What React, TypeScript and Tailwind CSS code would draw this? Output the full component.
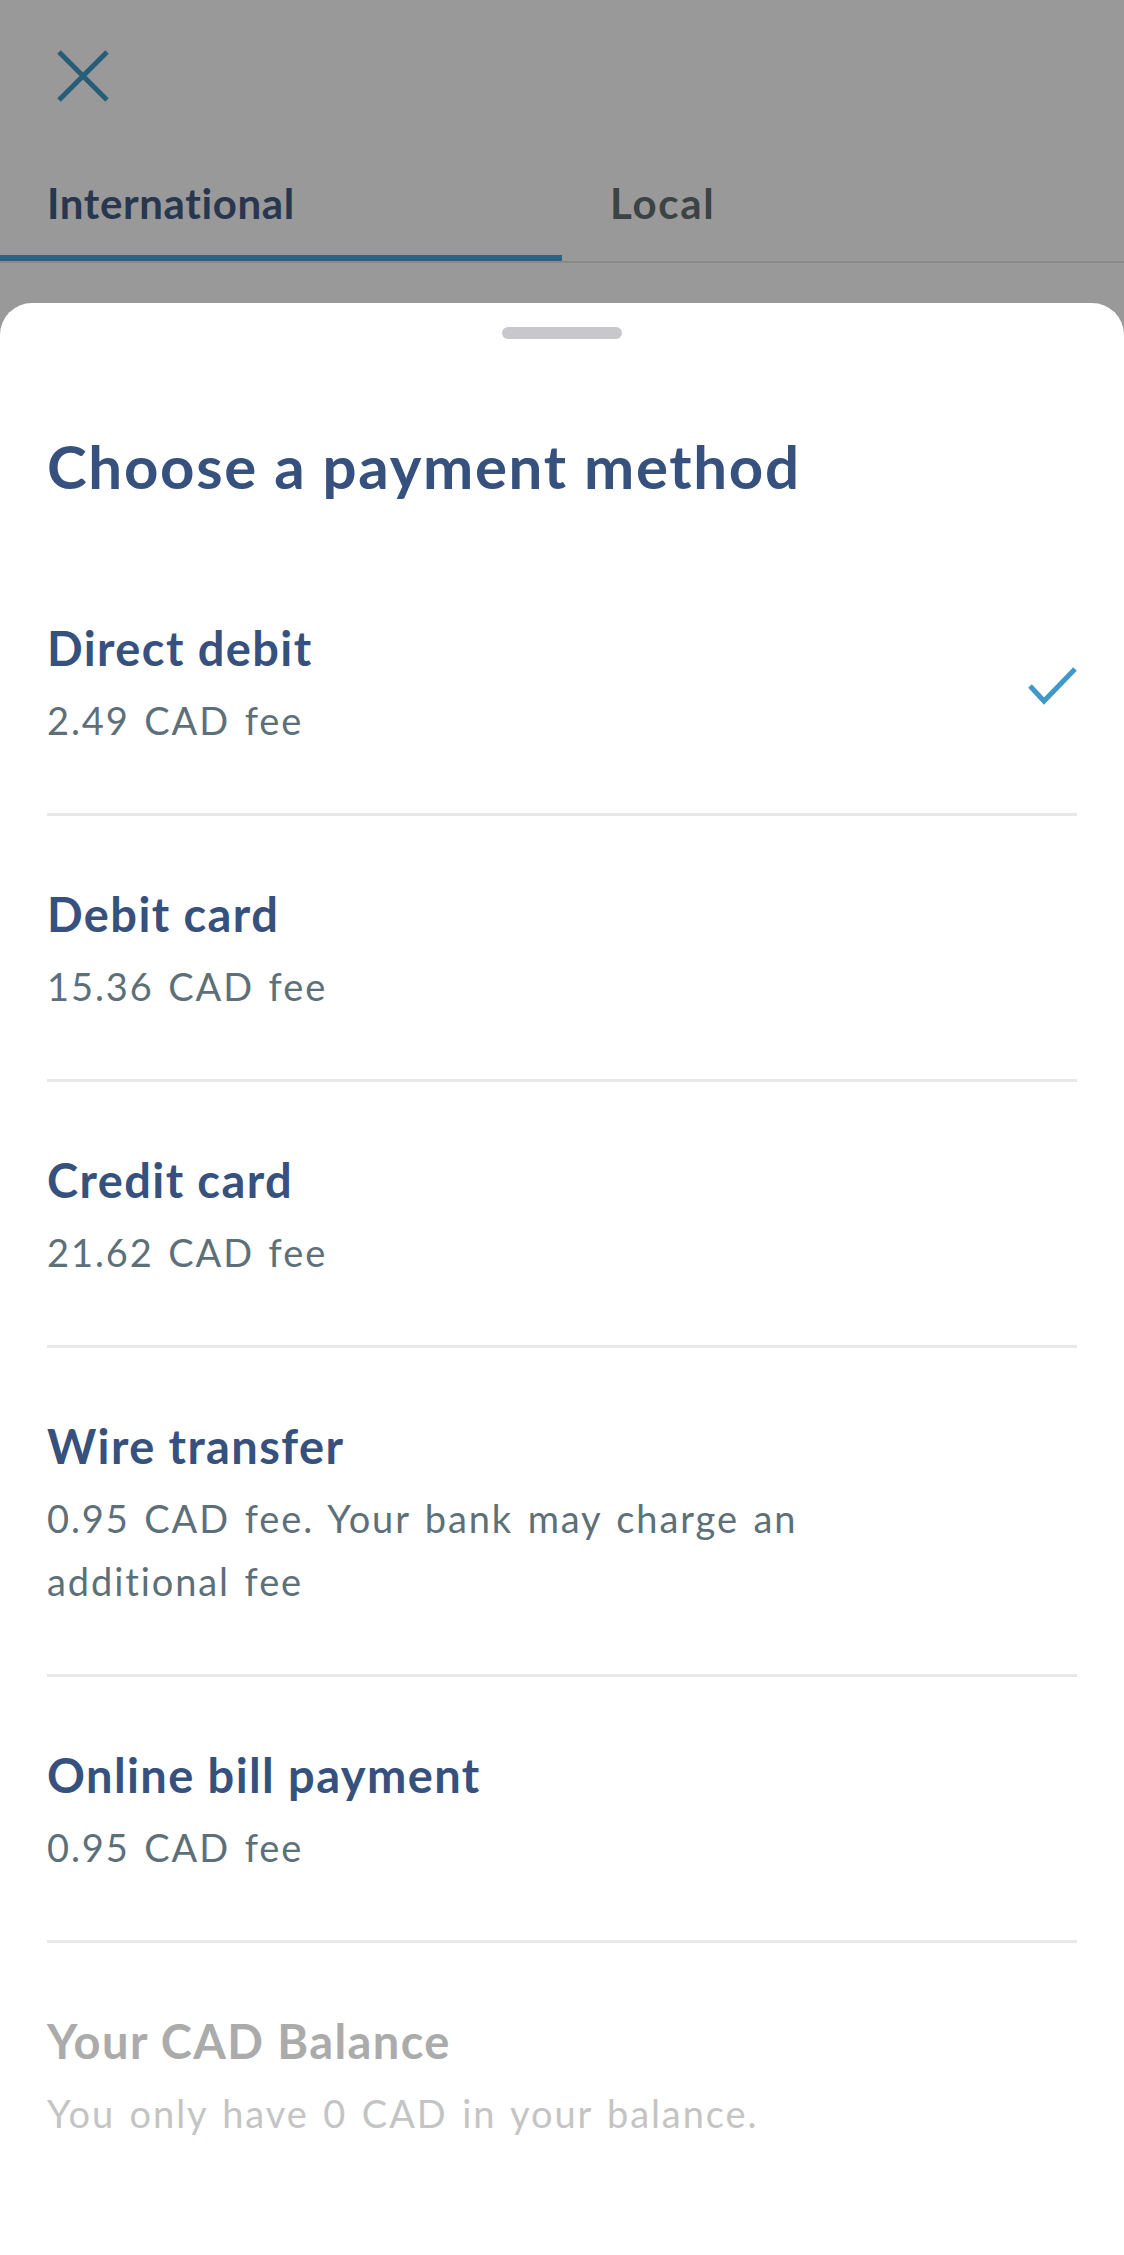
import React from "react";

type Method = {
    name: string;
    fee: string;
    selected?: boolean;
    disabled?: boolean;
};

const methods: Method[] = [
    { name: "Direct debit", fee: "2.49 CAD fee", selected: true },
    { name: "Debit card", fee: "15.36 CAD fee" },
    { name: "Credit card", fee: "21.62 CAD fee" },
    {
        name: "Wire transfer",
        fee: "0.95 CAD fee. Your bank may charge an additional fee",
    },
    { name: "Online bill payment", fee: "0.95 CAD fee" },
    {
        name: "Your CAD Balance",
        fee: "You only have 0 CAD in your balance.",
        disabled: true,
    },
];

function CloseIcon() {
    return (
        <svg width="52" height="52" viewBox="0 0 52 52" fill="none">
            <path
                d="M2 2 L50 50 M50 2 L2 50"
                stroke="#285d79"
                strokeWidth="5"
            />
        </svg>
    );
}

function CheckIcon() {
    return (
        <svg width="50" height="40" viewBox="0 0 50 40" fill="none">
            <path
                d="M3 20 L17 35 L48 3"
                stroke="#3f98c7"
                strokeWidth="5"
            />
        </svg>
    );
}

function MethodRow({ m, last }: { m: Method; last: boolean }) {
    return (
        <div className="flex flex-col">
            <div className="flex items-center pt-[70px] pb-[61px]">
                <div className="flex flex-col flex-1">
                    <span
                        className={`text-[47px] leading-[56px] font-bold tracking-[0.03em] ${
                            m.disabled ? "text-[#ababab]" : "text-[#37517e]"
                        }`}
                    >
                        {m.name}
                    </span>
                    <span
                        className={`mt-[13px] max-w-[850px] text-[38px] leading-[63px] tracking-[0.05em] [word-spacing:3px] ${
                            m.disabled ? "text-[#c4c4c4]" : "text-[#5d7079]"
                        }`}
                    >
                        {m.fee}
                    </span>
                </div>
                {m.selected && <CheckIcon />}
            </div>
            {!last && <div className="h-[3px] bg-[#e8e8e8]" />}
        </div>
    );
}

export default function App() {
    return (
        <div className="w-[1124px] min-h-[2255px] bg-[#999999] flex flex-col font-['Lato','Noto_Sans',sans-serif]">
            <header className="h-[152px] flex items-center pl-[57px]">
                <CloseIcon />
            </header>
            <nav className="flex border-b-2 border-[#8a8a8a]">
                <div className="flex-1 flex flex-col">
                    <div className="h-[103px] flex items-center pl-[47px] text-[42px] font-bold tracking-[0.015em] text-[#28364f]">
                        International
                    </div>
                    <div className="h-[6px] bg-[#2c6383]" />
                </div>
                <div className="flex-1 flex flex-col">
                    <div className="h-[103px] flex items-center pl-[48px] text-[42px] font-bold tracking-[0.04em] text-[#3c4345]">
                        Local
                    </div>
                    <div className="h-[6px]" />
                </div>
            </nav>
            <section className="mt-[40px] flex-1 bg-white rounded-t-[32px] px-[47px] pb-[60px] flex flex-col">
                <div className="mx-auto mt-[24px] h-[12px] w-[120px] rounded-full bg-[#c8c8cc]" />
                <h1 className="mt-[91px] text-[60px] leading-[72px] font-bold tracking-[0.028em] text-[#37517e]">
                    Choose a payment method
                </h1>
                <div className="mt-[48px] flex flex-col">
                    {methods.map((m, idx) => (
                        <MethodRow
                            key={m.name}
                            m={m}
                            last={idx == methods.length - 1}
                        />
                    ))}
                </div>
            </section>
        </div>
    );
}
